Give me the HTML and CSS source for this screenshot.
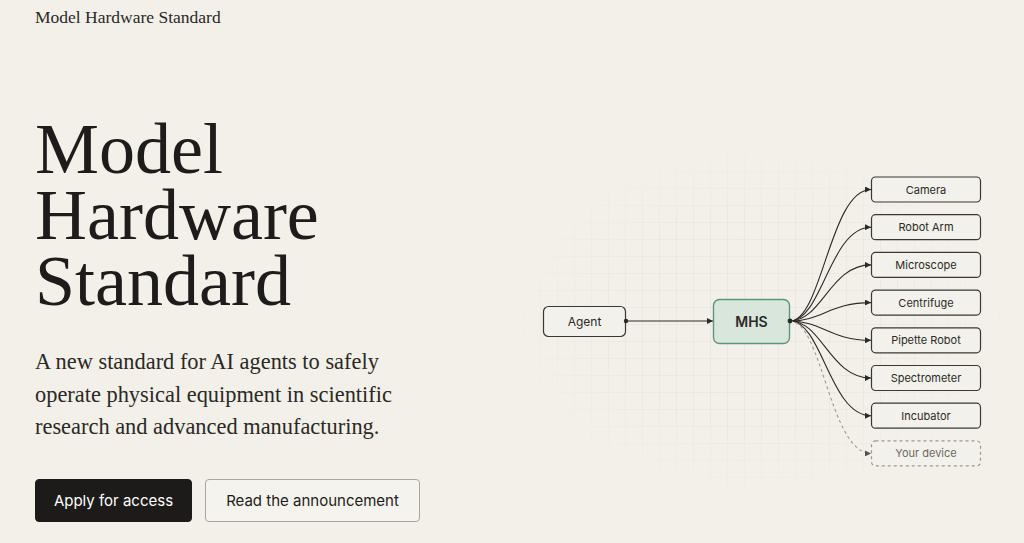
FILE: index.html
```html
<!DOCTYPE html>
<html lang="en">
<head>
  <meta charset="UTF-8" />
  <title>Model Hardware Standard</title>
  <link rel="stylesheet" href="styles.css">
</head>
<body>

  <header class="site-header">Model Hardware Standard</header>

  <main class="hero">
    <div class="hero-text">
      <h1>Model<br>Hardware<br>Standard</h1>
      <p class="lead">A new standard for AI agents to safely operate physical equipment in scientific research and advanced manufacturing.</p>
      <div class="actions">
        <a class="btn btn-dark" href="#">Apply for access</a>
        <a class="btn btn-light" href="#">Read the announcement</a>
      </div>
    </div>

    <svg class="diagram" width="480" height="340" viewBox="520 150 480 340">
      <defs>
        <pattern id="grid" x="523" y="155" width="17" height="17" patternUnits="userSpaceOnUse">
          <path d="M 17 0 L 0 0 0 17" fill="none" stroke="#e2dfd6" stroke-width="1"/>
        </pattern>
        <radialGradient id="fade" cx="760" cy="320" r="250" gradientUnits="userSpaceOnUse" gradientTransform="translate(0 320) scale(1 0.72) translate(0 -320)">
          <stop offset="0" stop-color="#fff"/>
          <stop offset="0.6" stop-color="#fff" stop-opacity="0.8"/>
          <stop offset="1" stop-color="#fff" stop-opacity="0"/>
        </radialGradient>
        <mask id="gridmask">
          <rect x="520" y="150" width="480" height="340" fill="url(#fade)"/>
        </mask>
        <marker id="arrow" viewBox="0 0 6 6" refX="6" refY="3" markerWidth="6" markerHeight="6" markerUnits="userSpaceOnUse" orient="auto">
          <path d="M0 0 L6 3 L0 6 z" fill="#2b2a27"/>
        </marker>
        <marker id="arrow-soft" viewBox="0 0 6 6" refX="6" refY="3" markerWidth="6" markerHeight="6" markerUnits="userSpaceOnUse" orient="auto">
          <path d="M0 0 L6 3 L0 6 z" fill="#55524b"/>
        </marker>
      </defs>

      <rect x="520" y="150" width="480" height="340" fill="url(#grid)" mask="url(#gridmask)"/>

      <!-- agent -> MHS -->
      <rect class="node" x="543.5" y="307.5" width="82" height="30" rx="5"/>
      <text class="label" x="584.5" y="326.5">Agent</text>
      <line class="edge" x1="626" y1="322" x2="713" y2="322" marker-end="url(#arrow)"/>
      <circle cx="626" cy="322" r="2.2" fill="#2b2a27"/>

      <rect class="hub" x="713.5" y="300.5" width="76" height="44" rx="6"/>
      <text class="hub-label" x="751.5" y="327.5">MHS</text>

      <!-- MHS -> devices -->
      <path class="edge" d="M790 322 C822 322 830 190.5 871 190.5" marker-end="url(#arrow)"/>
      <path class="edge" d="M790 322 C822 322 830 228.2 871 228.2" marker-end="url(#arrow)"/>
      <path class="edge" d="M790 322 C822 322 830 265.9 871 265.9" marker-end="url(#arrow)"/>
      <path class="edge" d="M790 322 C822 322 830 303.6 871 303.6" marker-end="url(#arrow)"/>
      <path class="edge" d="M790 322 C822 322 830 341.3 871 341.3" marker-end="url(#arrow)"/>
      <path class="edge" d="M790 322 C822 322 830 379 871 379" marker-end="url(#arrow)"/>
      <path class="edge" d="M790 322 C822 322 830 416.7 871 416.7" marker-end="url(#arrow)"/>
      <path class="edge edge-dashed" d="M790 322 C822 322 830 454.4 871 454.4" marker-end="url(#arrow-soft)"/>
      <circle cx="790" cy="322" r="2.4" fill="#2b2a27"/>

      <rect class="node" x="871.5" y="178" width="109" height="25" rx="4"/>
      <text class="label-sm" x="926" y="194.5">Camera</text>
      <rect class="node" x="871.5" y="215.7" width="109" height="25" rx="4"/>
      <text class="label-sm" x="926" y="232.2">Robot Arm</text>
      <rect class="node" x="871.5" y="253.4" width="109" height="25" rx="4"/>
      <text class="label-sm" x="926" y="269.9">Microscope</text>
      <rect class="node" x="871.5" y="291.1" width="109" height="25" rx="4"/>
      <text class="label-sm" x="926" y="307.6">Centrifuge</text>
      <rect class="node" x="871.5" y="328.8" width="109" height="25" rx="4"/>
      <text class="label-sm" x="926" y="345.3">Pipette Robot</text>
      <rect class="node" x="871.5" y="366.5" width="109" height="25" rx="4"/>
      <text class="label-sm" x="926" y="383">Spectrometer</text>
      <rect class="node" x="871.5" y="404.2" width="109" height="25" rx="4"/>
      <text class="label-sm" x="926" y="420.7">Incubator</text>
      <rect class="node node-dashed" x="871.5" y="441.9" width="109" height="25" rx="4"/>
      <text class="label-sm label-muted" x="926" y="458.4">Your device</text>
    </svg>
  </main>

</body>
</html>
```

FILE: styles.css
```css
body {
  margin: 0;
  background-color: #f2f0e9;
  color: #1d1c1a;
  font-family: "Liberation Serif", serif;
}
.site-header {
  padding: 7px 35px 0;
  font-size: 17.5px;
  line-height: 20px;
  color: #2a2926;
}
.hero {
  display: grid;
  grid-template-columns: 1fr 480px;
  align-items: center;
  padding: 89px 24px 0 35px;
}
.hero h1 {
  margin: 0;
  font-size: 72px;
  line-height: 66px;
  font-weight: normal;
}
.lead {
  margin: 32px 0 0;
  font-size: 22.4px;
  line-height: 32.5px;
  max-width: 390px;
  color: #2a2926;
}
.actions {
  display: flex;
  gap: 13px;
  margin-top: 35px;
}
.btn {
  display: inline-block;
  box-sizing: border-box;
  height: 43px;
  line-height: 41px;
  border-radius: 4px;
  font-family: Inter, sans-serif;
  font-size: 15px;
  text-align: center;
  white-space: nowrap;
  text-decoration: none;
}
.btn-dark {
  width: 157px;
  background-color: #1c1b19;
  border: 1px solid #1c1b19;
  color: #ffffff;
}
.btn-light {
  width: 215px;
  background-color: #f5f3ee;
  border: 1px solid #a9a59b;
  color: #1d1c1a;
}
.diagram {
  display: block;
}
.node {
  fill: #f3f1eb;
  stroke: #3a3834;
  stroke-width: 1.2;
}
.node-dashed {
  stroke: #9c988e;
  stroke-dasharray: 3 3;
}
.hub {
  fill: #d9e6dc;
  stroke: #5f9679;
  stroke-width: 1.4;
}
.edge {
  fill: none;
  stroke: #2b2a27;
  stroke-width: 1.1;
}
.edge-dashed {
  stroke: #9c988e;
  stroke-dasharray: 3 3;
}
.label, .label-sm, .hub-label {
  font-family: Inter, sans-serif;
  text-anchor: middle;
  fill: #2b2a27;
}
.label {
  font-size: 12px;
}
.label-sm {
  font-size: 11px;
}
.label-muted {
  fill: #6d6961;
}
.hub-label {
  font-size: 14px;
  font-weight: 600;
}
```
